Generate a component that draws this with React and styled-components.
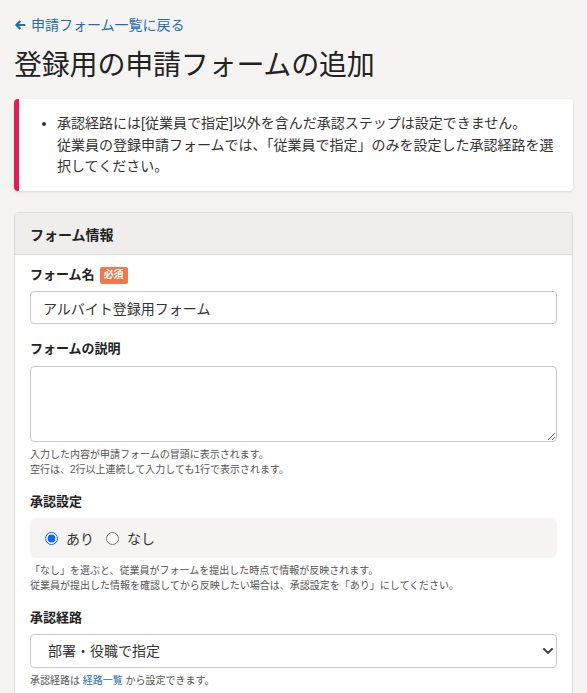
import React from "react";
import styled, { createGlobalStyle } from "styled-components";

const GlobalStyle = createGlobalStyle`
  html, body { margin: 0; padding: 0; background: #f5f4f2; }
  body {
    font-family: "Liberation Sans", "Noto Sans CJK JP", sans-serif;
    color: #333;
  }
  * { box-sizing: border-box; }
`;

const Page = styled.div`
  padding: 15px 14px 20px;
  min-height: 693px;
`;

const BackLink = styled.a`
  display: inline-flex;
  align-items: center;
  gap: 5px;
  font-size: 14px;
  line-height: 20px;
  color: #1f6db5;
  text-decoration: none;
`;

const ArrowIcon = styled.svg`
  width: 12px;
  height: 12px;
  flex: none;
`;

const Title = styled.h1`
  margin: 11px 0 13px;
  font-size: 28px;
  line-height: 40px;
  font-weight: 400;
  color: #222;
  letter-spacing: -0.2px;
`;

const Alert = styled.div`
  background: #fff;
  border-left: 5px solid #dc1f57;
  border-radius: 4px;
  box-shadow: 0 1px 3px rgba(0, 0, 0, 0.12);
  padding: 14px 16px 13px 0;
  margin-bottom: 21px;
`;

const AlertList = styled.ul`
  margin: 0;
  padding-left: 38px;
  font-size: 14px;
  line-height: 21.7px;
  color: #333;
`;

const Card = styled.section`
  background: #fff;
  border: 1px solid #d9d9d7;
  border-radius: 4px;
  overflow: hidden;
`;

const CardHeader = styled.div`
  background: #efeeec;
  border-bottom: 1px solid #d9d9d7;
  height: 42px;
  padding: 0 15px;
  display: flex;
  align-items: center;
  font-size: 14px;
  font-weight: 700;
  color: #222;
`;

const CardBody = styled.div`
  padding: 11px 15px 16px;
  display: flex;
  flex-direction: column;
  gap: 16px;
`;

const Field = styled.div`
  display: flex;
  flex-direction: column;
`;

const Label = styled.div`
  display: flex;
  align-items: center;
  gap: 5px;
  font-size: 13px;
  line-height: 18px;
  font-weight: 700;
  color: #222;
  margin-bottom: ${(p) => p.$gap || 7}px;
`;

const Badge = styled.span`
  display: inline-flex;
  align-items: center;
  height: 17px;
  padding: 0 4px;
  border-radius: 2px;
  background: #f4774a;
  color: #fff;
  font-size: 10px;
  font-weight: 700;
`;

const TextInput = styled.input`
  height: 33px;
  width: 100%;
  border: 1px solid #c9c9c9;
  border-radius: 4px;
  padding: 0 12px;
  font-family: inherit;
  font-size: 14px;
  color: #333;
  background: #fff;
  outline: none;
`;

const TextArea = styled.textarea`
  display: block;
  width: 100%;
  height: 76px;
  border: 1px solid #c9c9c9;
  border-radius: 4px;
  padding: 8px 12px;
  font-family: inherit;
  font-size: 14px;
  resize: vertical;
  outline: none;
`;

const Help = styled.p`
  margin: 5px 0 0;
  font-size: 10px;
  line-height: 15px;
  color: #555;
`;

const HelpLink = styled.a`
  color: #1f6db5;
  text-decoration: none;
`;

const RadioBox = styled.div`
  height: 40px;
  background: #f5f4f2;
  border-radius: 6px;
  padding: 0 15px;
  display: flex;
  align-items: center;
  gap: 12px;
`;

const RadioLabel = styled.label`
  display: inline-flex;
  align-items: center;
  gap: 8px;
  font-size: 14px;
  color: #333;
`;

const Radio = styled.input`
  margin: 0;
  width: 13px;
  height: 13px;
  accent-color: #1068e8;
`;

const SelectWrap = styled.div`
  position: relative;
`;

const Select = styled.select`
  appearance: none;
  -webkit-appearance: none;
  width: 100%;
  height: 34px;
  border: 1px solid #c9c9c9;
  border-radius: 4px;
  padding: 0 30px 0 17px;
  font-family: inherit;
  font-size: 14px;
  color: #333;
  background: #fff;
  outline: none;
`;

const Chevron = styled.svg`
  position: absolute;
  right: 4px;
  top: 50%;
  width: 10px;
  height: 6px;
  margin-top: -3px;
  pointer-events: none;
`;

export default function App() {
  return (
    <>
      <GlobalStyle />
      <Page>
        <BackLink href="#">
          <ArrowIcon viewBox="0 0 12 12">
            <path
              d="M5.6 1.2L0.9 6l4.7 4.8 1.5-1.5L5 7.1h6.3V4.9H5l2.1-2.2z"
              fill="currentColor"
            />
          </ArrowIcon>
          申請フォーム一覧に戻る
        </BackLink>
        <Title>登録用の申請フォームの追加</Title>
        <Alert>
          <AlertList>
            <li>
              承認経路には[従業員で指定]以外を含んだ承認ステップは設定できません。
              <br />
              従業員の登録申請フォームでは、「従業員で指定」のみを設定した承認経路を選択してください。
            </li>
          </AlertList>
        </Alert>
        <Card>
          <CardHeader>フォーム情報</CardHeader>
          <CardBody>
            <Field>
              <Label>
                フォーム名<Badge>必須</Badge>
              </Label>
              <TextInput defaultValue="アルバイト登録用フォーム" />
            </Field>
            <Field>
              <Label $gap={8}>フォームの説明</Label>
              <TextArea />
              <Help>
                入力した内容が申請フォームの冒頭に表示されます。
                <br />
                空行は、2行以上連続して入力しても1行で表示されます。
              </Help>
            </Field>
            <Field>
              <Label>承認設定</Label>
              <RadioBox>
                <RadioLabel>
                  <Radio type="radio" name="approval" defaultChecked />
                  あり
                </RadioLabel>
                <RadioLabel>
                  <Radio type="radio" name="approval" />
                  なし
                </RadioLabel>
              </RadioBox>
              <Help>
                「なし」を選ぶと、従業員がフォームを提出した時点で情報が反映されます。
                <br />
                従業員が提出した情報を確認してから反映したい場合は、承認設定を「あり」にしてください。
              </Help>
            </Field>
            <Field>
              <Label>承認経路</Label>
              <SelectWrap>
                <Select defaultValue="dept">
                  <option value="dept">部署・役職で指定</option>
                  <option value="emp">従業員で指定</option>
                </Select>
                <Chevron viewBox="0 0 10 6">
                  <polyline
                    points="1,1 5,5 9,1"
                    fill="none"
                    stroke="#444"
                    strokeWidth="2"
                    strokeLinecap="round"
                    strokeLinejoin="round"
                  />
                </Chevron>
              </SelectWrap>
              <Help>
                承認経路は <HelpLink href="#">経路一覧</HelpLink> から設定できます。
              </Help>
            </Field>
          </CardBody>
        </Card>
      </Page>
    </>
  );
}
